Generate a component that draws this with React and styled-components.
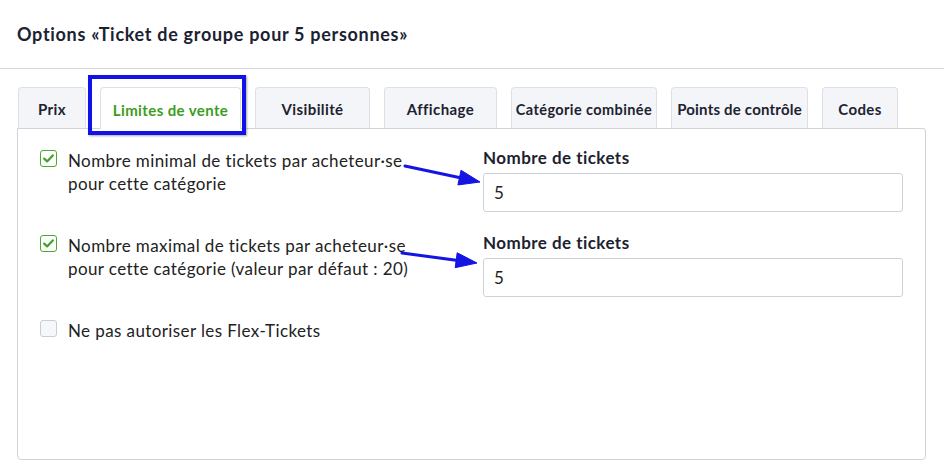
import React from 'react';
import styled, { createGlobalStyle } from 'styled-components';

const GlobalStyle = createGlobalStyle`
  body {
    margin: 0;
    background: #fff;
    font-family: Lato, "Open Sans", "Liberation Sans", sans-serif;
    color: #222;
  }
`;

const PageWrapper = styled.div`
  width: 944px;
  height: 466px;
  overflow: hidden;
  background: #fff;
`;

const Header = styled.header`
  height: 68px;
  padding: 0 17px;
  display: flex;
  align-items: center;
  border-bottom: 1px solid #d3d7df;
`;

const Title = styled.h1`
  margin: 0;
  font-size: 18px;
  font-weight: 700;
  color: #1b2232;
  letter-spacing: 0.7px;
`;

const Body = styled.div`
  padding: 18px 18px 0 17px;
`;

const TabBar = styled.div`
  position: relative;
  height: 41px;
  display: flex;
  align-items: flex-end;
  gap: 14px;
  padding-left: 1px;
`;

const Tab = styled.div`
  position: relative;
  z-index: ${p => (p.$active ? 2 : 1)};
  box-sizing: border-box;
  width: ${p => p.$width}px;
  height: ${p => (p.$active ? 42 : 41)}px;
  margin-bottom: ${p => (p.$active ? -1 : 0)}px;
  padding-top: 2px;
  display: flex;
  align-items: center;
  justify-content: center;
  background: ${p => (p.$active ? '#fff' : '#f4f5f8')};
  border: 1px solid #dde0e6;
  border-bottom: none;
  border-radius: 4px 4px 0 0;
  font-size: ${p => p.$size || 15}px;
  font-weight: 700;
  letter-spacing: ${p => p.$spacing ?? 0.4}px;
  color: ${p => (p.$active ? '#3c9d1c' : '#1d2230')};
  white-space: nowrap;
`;

const Highlight = styled.div`
  position: absolute;
  z-index: 3;
  left: 71px;
  top: -12px;
  width: 158px;
  height: 60px;
  box-sizing: border-box;
  border: 4px solid #1111e8;
  box-shadow: 1px 1px 2px rgba(0, 0, 0, 0.35);
  pointer-events: none;
`;

const Panel = styled.div`
  position: relative;
  box-sizing: border-box;
  height: 332px;
  padding: 18px 22px;
  border: 1px solid #cfd4dc;
  border-radius: 0 3px 4px 4px;
  display: flex;
  flex-direction: column;
  gap: 20px;
`;

const Row = styled.div`
  display: grid;
  grid-template-columns: 420px 420px;
  column-gap: 23px;
  align-items: start;
`;

const CheckRow = styled.label`
  display: flex;
  align-items: flex-start;
  gap: 11px;
  padding: 2px 30px 0 0;
  font-size: 17px;
  line-height: 23px;
  letter-spacing: 0.4px;
  color: #222;
`;

const Box = styled.span`
  flex: none;
  box-sizing: border-box;
  width: 17px;
  height: 17px;
  margin-top: 1px;
  border-radius: 3px;
  border: 1px solid ${p => (p.$checked ? '#4aaa2a' : '#c9cdd5')};
  background: ${p => (p.$checked ? '#fff' : '#f6f7f9')};
  display: flex;
  align-items: center;
  justify-content: center;
`;

const Field = styled.div`
  display: flex;
  flex-direction: column;
  gap: 4px;
`;

const FieldLabel = styled.div`
  font-size: 17px;
  font-weight: 700;
  line-height: 22px;
  letter-spacing: 0.45px;
  color: #1d2230;
`;

const Input = styled.div`
  box-sizing: border-box;
  height: 39px;
  padding: 0 10px;
  display: flex;
  align-items: center;
  border: 1px solid #cdd1d9;
  border-radius: 3px;
  font-size: 17px;
  color: #222;
`;

const Overlay = styled.svg`
  position: absolute;
  left: 0;
  top: 0;
  width: 100%;
  height: 100%;
  pointer-events: none;
  overflow: visible;
`;

const Arrow = ({ x1, y1, x2, y2 }) => {
  const dx = x2 - x1;
  const dy = y2 - y1;
  const len = Math.hypot(dx, dy);
  const ux = dx / len;
  const uy = dy / len;
  const bx = x2 - ux * 21;
  const by = y2 - uy * 21;
  const px = -uy * 7.5;
  const py = ux * 7.5;
  return (
    <g fill="#1414e4" stroke="#1414e4">
      <line x1={x1} y1={y1} x2={bx + ux * 2} y2={by + uy * 2} strokeWidth="3" strokeLinecap="round" />
      <polygon points={`${x2},${y2} ${bx + px},${by + py} ${bx - px},${by - py}`} strokeWidth="1" strokeLinejoin="round" />
    </g>
  );
};

const Check = ({ checked }) => (
  <Box $checked={checked}>
    {checked && (
      <svg width="11" height="9" viewBox="0 0 11 9">
        <path d="M1.2 4.6 L4.1 7.4 L9.8 1.4" fill="none" stroke="#3fa324" strokeWidth="2.2" strokeLinecap="round" strokeLinejoin="round" />
      </svg>
    )}
  </Box>
);

const tabs = [
  { label: 'Prix', width: 68 },
  { label: 'Limites de vente', width: 141, active: true },
  { label: 'Visibilité', width: 115 },
  { label: 'Affichage', width: 113 },
  { label: 'Catégorie combinée', width: 146, size: 14.5 },
  { label: 'Points de contrôle', width: 137, spacing: 0.2 },
  { label: 'Codes', width: 76 },
];

const App = () => {
  return (
    <PageWrapper>
      <GlobalStyle />
      <Header>
        <Title>Options «Ticket de groupe pour 5 personnes»</Title>
      </Header>
      <Body>
        <TabBar>
          {tabs.map(t => (
            <Tab key={t.label} $active={t.active} $width={t.width} $size={t.size} $spacing={t.spacing}>
              {t.label}
            </Tab>
          ))}
          <Highlight />
        </TabBar>
        <Panel>
          <Row>
            <CheckRow>
              <Check checked />
              <span>Nombre minimal de tickets par acheteur·se pour cette catégorie</span>
            </CheckRow>
            <Field>
              <FieldLabel>Nombre de tickets</FieldLabel>
              <Input>5</Input>
            </Field>
          </Row>
          <Row>
            <CheckRow>
              <Check checked />
              <span>Nombre maximal de tickets par acheteur·se pour cette catégorie (valeur par défaut : 20)</span>
            </CheckRow>
            <Field>
              <FieldLabel>Nombre de tickets</FieldLabel>
              <Input>5</Input>
            </Field>
          </Row>
          <Row>
            <CheckRow>
              <Check />
              <span>Ne pas autoriser les Flex-Tickets</span>
            </CheckRow>
          </Row>
          <Overlay>
            <Arrow x1={387} y1={37} x2={462} y2={53} />
            <Arrow x1={384} y1={124} x2={459} y2={134} />
          </Overlay>
        </Panel>
      </Body>
    </PageWrapper>
  );
};

export default App;
